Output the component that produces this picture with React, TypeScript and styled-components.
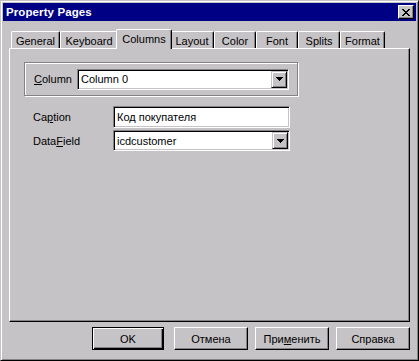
import React from 'react';
import styled, { createGlobalStyle, css } from 'styled-components';

const GREY = '#c6c3c6';
const DARK = '#848284';
const NAVY = '#000084';

const GlobalStyle = createGlobalStyle`
  html, body {
    margin: 0;
    padding: 0;
    background: ${GREY};
  }
  * {
    box-sizing: border-box;
  }
`;

const Window = styled.div`
  width: 419px;
  height: 361px;
  padding: 2px;
  border: 1px solid;
  border-color: ${GREY} #000 #000 ${GREY};
  box-shadow: inset 1px 1px 0 #fff, inset -1px -1px 0 ${DARK};
  background: ${GREY};
  font-family: 'Liberation Sans', Arial, sans-serif;
  font-size: 11px;
  color: #000;
  display: flex;
  flex-direction: column;
`;

const TitleBar = styled.div`
  height: 18px;
  background: ${NAVY};
  display: flex;
  align-items: center;
  justify-content: space-between;
  padding: 0 2px 0 3px;
`;

const TitleText = styled.div`
  color: #fff;
  font-weight: 700;
  font-size: 11.5px;
  letter-spacing: 0.1px;
`;

const raised = css`
  border: 1px solid;
  border-color: #fff #000 #000 #fff;
  box-shadow: inset -1px -1px 0 ${DARK};
  background: ${GREY};
`;

const CloseButton = styled.div`
  ${raised};
  width: 16px;
  height: 14px;
  display: flex;
  align-items: center;
  justify-content: center;
`;

const TabStrip = styled.div`
  display: flex;
  align-items: flex-end;
  height: 19px;
  margin: 8px 6px 0;
  padding-left: 2px;
`;

const Tab = styled.div<{ $w: number; $active?: boolean }>`
  width: ${(p) => p.$w}px;
  height: 17px;
  border-left: 1px solid #fff;
  border-top: 1px solid #fff;
  border-right: 1px solid #000;
  border-radius: 2px 2px 0 0;
  box-shadow: inset -1px 0 0 ${DARK};
  background: ${GREY};
  display: flex;
  align-items: center;
  justify-content: center;
  padding-top: 1px;
  white-space: nowrap;
  ${(p) =>
    p.$active &&
    css`
      width: ${p.$w + 4}px;
      height: 20px;
      margin: 0 -2px -1px;
      padding-bottom: 2px;
      position: relative;
      z-index: 1;
    `}
`;

const Panel = styled.div`
  height: 274px;
  margin: 0 6px;
  border: 1px solid;
  border-color: #fff #000 #000 #fff;
  box-shadow: inset -1px -1px 0 ${DARK};
  padding: 13px 0 0 14px;
`;

const GroupBox = styled.div`
  width: 274px;
  height: 34px;
  border: 1px solid ${DARK};
  box-shadow: inset 1px 1px 0 #fff, 1px 1px 0 #fff;
  display: flex;
  align-items: center;
  padding: 0 8px 0 9px;
`;

const Label = styled.div<{ $w: number }>`
  width: ${(p) => p.$w}px;
  flex: none;
  white-space: nowrap;
`;

const Row = styled.div<{ $gap?: number }>`
  display: flex;
  align-items: center;
  padding-left: 9px;
  margin-top: ${(p) => p.$gap ?? 0}px;
`;

const Field = styled.div<{ $w: number; $h: number }>`
  width: ${(p) => p.$w}px;
  height: ${(p) => p.$h}px;
  border: 1px solid;
  border-color: ${DARK} #fff #fff ${DARK};
  box-shadow: inset 1px 1px 0 #000, inset -1px -1px 0 ${GREY};
  background: #fff;
  display: flex;
  align-items: center;
  padding: 2px 2px 2px 3px;
  white-space: nowrap;
`;

const FieldText = styled.div`
  flex: 1;
`;

const DropButton = styled.div`
  ${raised};
  border-color: ${GREY} #000 #000 ${GREY};
  box-shadow: inset 1px 1px 0 #fff, inset -1px -1px 0 ${DARK};
  width: 16px;
  height: 17px;
  margin-right: -1px;
  display: flex;
  align-items: center;
  justify-content: center;
`;

const ButtonRow = styled.div`
  display: flex;
  justify-content: flex-end;
  gap: 7px;
  margin: 5px 6px 0 0;
`;

const Button = styled.div<{ $default?: boolean }>`
  ${raised};
  width: 74px;
  height: 23px;
  display: flex;
  align-items: center;
  justify-content: center;
  ${(p) =>
    p.$default &&
    css`
      width: 72px;
      border-color: #000;
      box-shadow: inset 1px 1px 0 #fff, inset -1px -1px 0 #000, inset -2px -2px 0 ${DARK};
      margin-right: 3px;
    `}
`;

const CloseIcon = () => (
  <svg width="8" height="7" viewBox="0 0 8 7" shapeRendering="crispEdges">
    <path
      d="M0 0h2v1H0zM6 0h2v1H6zM1 1h2v1H1zM5 1h2v1H5zM2 2h4v1H2zM3 3h2v1H3zM2 4h4v1H2zM1 5h2v1H1zM5 5h2v1H5zM0 6h2v1H0zM6 6h2v1H6z"
      fill="#000"
    />
  </svg>
);

const Arrow = () => (
  <svg width="7" height="4" viewBox="0 0 7 4" shapeRendering="crispEdges">
    <path d="M0 0h7v1H0zM1 1h5v1H1zM2 2h3v1H2zM3 3h1v1H3z" fill="#000" />
  </svg>
);

const tabs = [
  { name: 'General', w: 49 },
  { name: 'Keyboard', w: 58 },
  { name: 'Columns', w: 52, active: true },
  { name: 'Layout', w: 44 },
  { name: 'Color', w: 42 },
  { name: 'Font', w: 42 },
  { name: 'Splits', w: 42 },
  { name: 'Format', w: 45 },
];

export default function App() {
  return (
    <>
      <GlobalStyle />
      <Window>
        <TitleBar>
          <TitleText>Property Pages</TitleText>
          <CloseButton>
            <CloseIcon />
          </CloseButton>
        </TitleBar>
        <TabStrip>
          {tabs.map((t) => (
            <Tab key={t.name} $w={t.w} $active={t.active}>
              {t.name}
            </Tab>
          ))}
        </TabStrip>
        <Panel>
          <GroupBox>
            <Label $w={43}>
              <u>C</u>olumn
            </Label>
            <Field $w={213} $h={21}>
              <FieldText>Column 0</FieldText>
              <DropButton>
                <Arrow />
              </DropButton>
            </Field>
          </GroupBox>
          <Row $gap={10}>
            <Label $w={80}>
              Ca<u>p</u>tion
            </Label>
            <Field $w={177} $h={22}>
              <FieldText>Код покупателя</FieldText>
            </Field>
          </Row>
          <Row $gap={2}>
            <Label $w={80}>
              Data<u>F</u>ield
            </Label>
            <Field $w={177} $h={21}>
              <FieldText>icdcustomer</FieldText>
              <DropButton>
                <Arrow />
              </DropButton>
            </Field>
          </Row>
        </Panel>
        <ButtonRow>
          <Button $default>OK</Button>
          <Button>Отмена</Button>
          <Button>
            При<u>м</u>енить
          </Button>
          <Button>Справка</Button>
        </ButtonRow>
      </Window>
    </>
  );
}
